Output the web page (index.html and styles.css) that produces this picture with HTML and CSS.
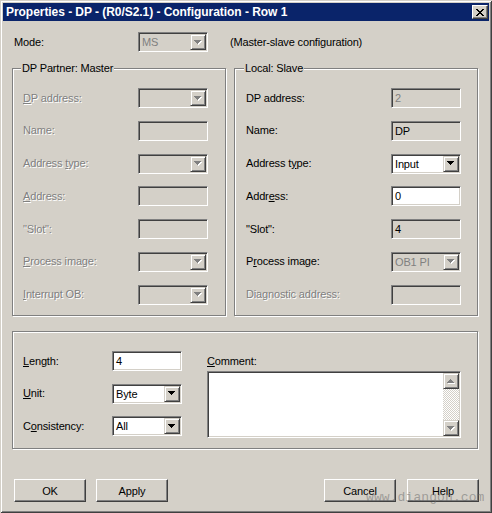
FILE: index.html
```html
<!DOCTYPE html>
<html>
<head>
<meta charset="utf-8">
<title>Properties - DP</title>
<link rel="stylesheet" href="styles.css">
</head>
<body>
<div class="window">
  <div class="titlebar">
    <span class="title">Properties - DP - (R0/S2.1) - Configuration - Row 1</span>
    <span class="close"><svg width="8" height="7" viewBox="0 0 8 7" shape-rendering="crispEdges"><path d="M0 0h2v1H0zM6 0h2v1H6zM1 1h2v1H1zM5 1h2v1H5zM2 2h4v1H2zM3 3h2v1H3zM2 4h4v1H2zM1 5h2v1H1zM5 5h2v1H5zM0 6h2v1H0zM6 6h2v1H6z" fill="#000"/></svg></span>
  </div>
  <div class="content">
    <div class="mode-row">
      <span class="lbl mode-lbl">Mode:</span>
      <div class="combo off"><span class="val">MS</span><span class="cbtn"><svg width="8" height="5" viewBox="0 0 8 5" shape-rendering="crispEdges"><path class="sh" d="M1 1h7v1H1zM2 2h5v1H2zM3 3h3v1H3zM4 4h1v1H4z"/><path class="ar" d="M0 0h7v1H0zM1 1h5v1H1zM2 2h3v1H2zM3 3h1v1H3z"/></svg></span></div>
      <span class="desc">(Master-slave configuration)</span>
    </div>

    <div class="groups">
      <div class="group g-left">
        <span class="legend">DP Partner: Master</span>
        <div class="row"><span class="lbl off"><u>D</u>P address:</span><div class="combo off"><span class="val"></span><span class="cbtn"><svg width="8" height="5" viewBox="0 0 8 5" shape-rendering="crispEdges"><path class="sh" d="M1 1h7v1H1zM2 2h5v1H2zM3 3h3v1H3zM4 4h1v1H4z"/><path class="ar" d="M0 0h7v1H0zM1 1h5v1H1zM2 2h3v1H2zM3 3h1v1H3z"/></svg></span></div></div>
        <div class="row"><span class="lbl off">Name:</span><div class="field off"></div></div>
        <div class="row"><span class="lbl off">Address <u>t</u>ype:</span><div class="combo off"><span class="val"></span><span class="cbtn"><svg width="8" height="5" viewBox="0 0 8 5" shape-rendering="crispEdges"><path class="sh" d="M1 1h7v1H1zM2 2h5v1H2zM3 3h3v1H3zM4 4h1v1H4z"/><path class="ar" d="M0 0h7v1H0zM1 1h5v1H1zM2 2h3v1H2zM3 3h1v1H3z"/></svg></span></div></div>
        <div class="row"><span class="lbl off"><u>A</u>ddress:</span><div class="field off"></div></div>
        <div class="row"><span class="lbl off">"Slot":</span><div class="field off"></div></div>
        <div class="row"><span class="lbl off"><u>P</u>rocess image:</span><div class="combo off"><span class="val"></span><span class="cbtn"><svg width="8" height="5" viewBox="0 0 8 5" shape-rendering="crispEdges"><path class="sh" d="M1 1h7v1H1zM2 2h5v1H2zM3 3h3v1H3zM4 4h1v1H4z"/><path class="ar" d="M0 0h7v1H0zM1 1h5v1H1zM2 2h3v1H2zM3 3h1v1H3z"/></svg></span></div></div>
        <div class="row"><span class="lbl off"><u>I</u>nterrupt OB:</span><div class="combo off"><span class="val"></span><span class="cbtn"><svg width="8" height="5" viewBox="0 0 8 5" shape-rendering="crispEdges"><path class="sh" d="M1 1h7v1H1zM2 2h5v1H2zM3 3h3v1H3zM4 4h1v1H4z"/><path class="ar" d="M0 0h7v1H0zM1 1h5v1H1zM2 2h3v1H2zM3 3h1v1H3z"/></svg></span></div></div>
      </div>

      <div class="group g-right">
        <span class="legend">Local: Slave</span>
        <div class="row"><span class="lbl">DP address:</span><div class="field off"><span class="val dim">2</span></div></div>
        <div class="row"><span class="lbl">Name:</span><div class="field off"><span class="val">DP</span></div></div>
        <div class="row"><span class="lbl">Address t<u>y</u>pe:</span><div class="combo"><span class="val">Input</span><span class="cbtn"><svg width="8" height="5" viewBox="0 0 8 5" shape-rendering="crispEdges"><path class="ar" d="M0 0h7v1H0zM1 1h5v1H1zM2 2h3v1H2zM3 3h1v1H3z"/></svg></span></div></div>
        <div class="row"><span class="lbl">Addr<u>e</u>ss:</span><div class="field"><span class="val">0</span></div></div>
        <div class="row"><span class="lbl">"Slot":</span><div class="field off"><span class="val">4</span></div></div>
        <div class="row"><span class="lbl">P<u>r</u>ocess image:</span><div class="combo off"><span class="val">OB1 PI</span><span class="cbtn"><svg width="8" height="5" viewBox="0 0 8 5" shape-rendering="crispEdges"><path class="sh" d="M1 1h7v1H1zM2 2h5v1H2zM3 3h3v1H3zM4 4h1v1H4z"/><path class="ar" d="M0 0h7v1H0zM1 1h5v1H1zM2 2h3v1H2zM3 3h1v1H3z"/></svg></span></div></div>
        <div class="row"><span class="lbl off">Diagnostic address:</span><div class="field off"></div></div>
      </div>
    </div>

    <div class="group g-bottom">
      <div class="props">
        <div class="row"><span class="lbl"><u>L</u>ength:</span><div class="field"><span class="val">4</span></div></div>
        <div class="row"><span class="lbl"><u>U</u>nit:</span><div class="combo"><span class="val">Byte</span><span class="cbtn"><svg width="8" height="5" viewBox="0 0 8 5" shape-rendering="crispEdges"><path class="ar" d="M0 0h7v1H0zM1 1h5v1H1zM2 2h3v1H2zM3 3h1v1H3z"/></svg></span></div></div>
        <div class="row"><span class="lbl">C<u>o</u>nsistency:</span><div class="combo"><span class="val">All</span><span class="cbtn"><svg width="8" height="5" viewBox="0 0 8 5" shape-rendering="crispEdges"><path class="ar" d="M0 0h7v1H0zM1 1h5v1H1zM2 2h3v1H2zM3 3h1v1H3z"/></svg></span></div></div>
      </div>
      <div class="comment">
        <span class="lbl"><u>C</u>omment:</span>
        <div class="memo">
          <div class="vscroll">
            <span class="sbtn"><svg width="8" height="5" viewBox="0 0 8 5" shape-rendering="crispEdges"><path class="sh" d="M4 1h1v1H4zM3 2h3v1H3zM2 3h5v1H2zM1 4h7v1H1z"/><path class="ar" d="M3 0h1v1H3zM2 1h3v1H2zM1 2h5v1H1zM0 3h7v1H0z"/></svg></span>
            <span class="track"></span>
            <span class="sbtn"><svg width="8" height="5" viewBox="0 0 8 5" shape-rendering="crispEdges"><path class="sh" d="M1 1h7v1H1zM2 2h5v1H2zM3 3h3v1H3zM4 4h1v1H4z"/><path class="ar" d="M0 0h7v1H0zM1 1h5v1H1zM2 2h3v1H2zM3 3h1v1H3z"/></svg></span>
          </div>
        </div>
      </div>
    </div>

    <div class="buttons">
      <div class="bgroup">
        <span class="btn">OK</span>
        <span class="btn">Apply</span>
      </div>
      <div class="bgroup bg-right">
        <span class="btn">Cancel</span>
        <span class="btn">Help</span>
      </div>
    </div>
  </div>
  <div class="watermark">www.diangon.com</div>
</div>
</body>
</html>
```
FILE: styles.css
```css
* { box-sizing: border-box; }
html, body { margin: 0; padding: 0; }
body {
  width: 492px;
  height: 513px;
  overflow: hidden;
  background: #d4d0c8;
  font-family: "Liberation Sans", Arial, sans-serif;
  font-size: 11px;
  letter-spacing: -0.15px;
  color: #000;
}
u { text-decoration: underline; text-underline-offset: 1px; }

.window {
  position: relative;
  width: 492px;
  height: 513px;
  padding: 3px;
  background: #d4d0c8;
  box-shadow: inset 1px 1px #d4d0c8, inset -1px -1px #404040, inset 2px 2px #ffffff, inset -2px -2px #808080;
}

.titlebar {
  height: 18px;
  background: #0a246a;
  display: flex;
  align-items: center;
  justify-content: space-between;
  padding: 0 1px 0 3px;
}
.title {
  color: #fff;
  font-weight: bold;
  font-size: 12px;
  letter-spacing: -0.05px;
  white-space: nowrap;
}
.close {
  width: 16px;
  height: 14px;
  background: #d4d0c8;
  border: 1px solid;
  border-color: #ffffff #404040 #404040 #ffffff;
  box-shadow: inset -1px -1px #808080;
  display: flex;
  align-items: center;
  justify-content: center;
}
.close svg { display: block; }

.content {
  padding: 11px 11px 0 9px;
}

.mode-row {
  display: flex;
  align-items: center;
  height: 20px;
}
.mode-lbl { width: 124px; margin-left: 2px; }
.desc { margin-left: 22px; }

.lbl { line-height: 19px; white-space: nowrap; }
.lbl.off { color: #808080; text-shadow: 1px 1px 0 #ffffff; }

.combo, .field, .memo {
  border: 1px solid;
  border-color: #808080 #ffffff #ffffff #808080;
  box-shadow: inset 1px 1px #404040, inset -1px -1px #d4d0c8;
  background: #fff;
}
.combo {
  width: 70px;
  height: 20px;
  padding: 1px;
  display: flex;
}
.combo.off, .field.off { background: #d4d0c8; }
.combo .val {
  flex: 1;
  line-height: 16px;
  padding-left: 2px;
  white-space: nowrap;
}
.combo.off .val { color: #808080; }
.cbtn, .sbtn {
  width: 16px;
  height: 16px;
  background: #d4d0c8;
  border: 1px solid;
  border-color: #d4d0c8 #404040 #404040 #d4d0c8;
  box-shadow: inset 1px 1px #ffffff, inset -1px -1px #808080;
  display: flex;
  align-items: center;
  justify-content: center;
  flex: none;
}
.cbtn svg, .sbtn svg { display: block; }
.ar { fill: #000; }
.sh { fill: #ffffff; }
.off .ar, .sbtn .ar { fill: #808080; }

.field {
  width: 70px;
  height: 20px;
  padding: 1px 3px;
}
.field .val { line-height: 16px; display: block; }
.field .val.dim { color: #808080; }

.groups {
  display: flex;
  gap: 8px;
  margin-top: 16px;
}
.group {
  position: relative;
  border: 1px solid #808080;
  box-shadow: inset 1px 1px #ffffff, 1px 1px #ffffff;
}
.legend {
  position: absolute;
  top: -7px;
  left: 8px;
  padding: 0 1px;
  line-height: 13px;
  background: #d4d0c8;
}
.g-left, .g-right {
  height: 248px;
  padding-top: 19px;
  display: flex;
  flex-direction: column;
  gap: 12.8px;
}
.g-left { width: 214px; padding-left: 10px; }
.g-right { width: 244px; padding-left: 11px; }
.g-right .legend { left: 9px; }
.row { display: flex; align-items: center; height: 20px; }
.g-left .row .lbl { width: 115px; }
.g-right .row .lbl { width: 145px; }

.g-bottom {
  margin-top: 15px;
  width: 466px;
  height: 118px;
  padding: 19px 0 0 10px;
  display: flex;
  gap: 25px;
}
.props {
  display: flex;
  flex-direction: column;
  gap: 12.5px;
}
.props .row .lbl { width: 89px; }
.comment {
  display: flex;
  flex-direction: column;
}
.comment .lbl { line-height: 20px; }
.memo {
  width: 254px;
  height: 67px;
  padding: 1px;
  display: flex;
  justify-content: flex-end;
}
.vscroll {
  width: 16px;
  display: flex;
  flex-direction: column;
}
.track {
  flex: 1;
  background: repeating-conic-gradient(#ffffff 0 25%, #d4d0c8 0 50%) 0 0 / 2px 2px;
}

.buttons {
  display: flex;
  justify-content: space-between;
  margin-top: 30px;
  margin-left: 2px;
  margin-right: -1px;
}
.bgroup { display: flex; gap: 10px; }
.bg-right { gap: 11px; }
.btn {
  width: 72px;
  height: 23px;
  display: flex;
  align-items: center;
  justify-content: center;
  background: #d4d0c8;
  border: 1px solid;
  border-color: #ffffff #404040 #404040 #ffffff;
  box-shadow: inset -1px -1px #808080;
}

.watermark {
  position: absolute;
  left: 366px;
  top: 490px;
  font-family: "Liberation Mono", "Courier New", monospace;
  font-size: 13px;
  letter-spacing: 0.1px;
  color: rgba(110, 110, 110, 0.55);
  white-space: nowrap;
}
```
